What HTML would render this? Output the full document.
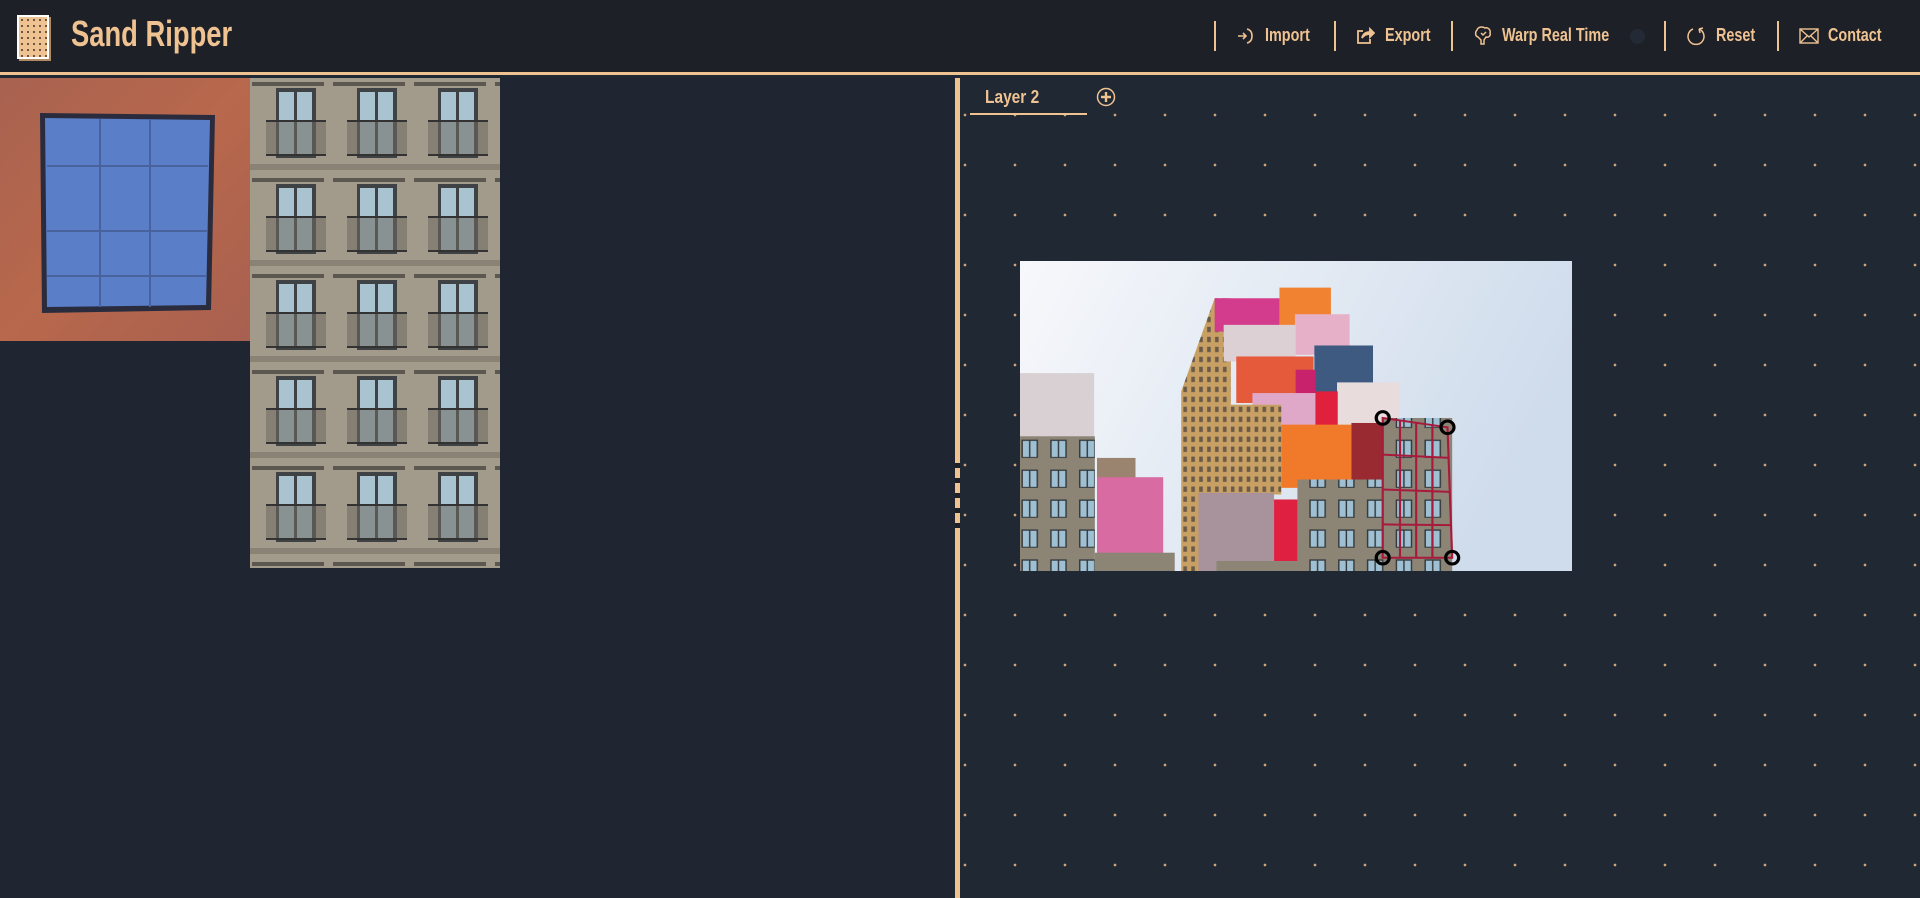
<!DOCTYPE html>
<html><head><meta charset="utf-8">
<style>
*{margin:0;padding:0;box-sizing:border-box}
body{width:1920px;height:898px;overflow:hidden;background:#202833;font-family:"Liberation Sans",sans-serif;position:relative}
.hdr{position:absolute;left:0;top:0;width:1920px;height:75px;background:#1d2027;border-bottom:3px solid #efc292}
.title{position:absolute;left:71px;top:13px;font-size:36px;font-weight:bold;color:#efc292;transform:scaleX(0.76);transform-origin:left;white-space:nowrap}
.logo{position:absolute;left:17px;top:15px;width:32px;height:44px;background:#efc292;border:2px solid #fff;box-shadow:2px 2px 0 #b08a60;
background-image:radial-gradient(circle,#5a4030 0.8px,transparent 1.2px);background-size:6px 6px}
.sep{position:absolute;top:21px;width:2px;height:30px;background:#efc292}
.t{position:absolute;top:24px;line-height:22px;color:#efc292;font-weight:bold;font-size:18px;transform:scaleX(0.8);transform-origin:left;white-space:nowrap}
.ic{position:absolute}
.left{position:absolute;left:0;top:78px;width:955px;height:820px;background:#1f2631}
.div{position:absolute;left:955px;top:78px;width:5px;height:820px;background:#efc292}
.gap{position:absolute;left:955px;width:5px;height:5px;background:#1d2027}
.right{position:absolute;left:960px;top:78px;width:960px;height:820px;background-color:#202833;
background-image:radial-gradient(circle at 5px 37px,#cfa57c 1.1px,transparent 1.6px);background-size:50px 50px}
</style></head><body>
<div class="hdr">
 <div class="logo"></div>
 <div class="title">Sand Ripper</div>
  <div class="sep" style="left:1214px"></div>
  <svg class="ic" style="left:1236px;top:27px" width="18" height="18" viewBox="0 0 18 18" fill="none" stroke="#efc292" stroke-width="1.6"><path d="M2 9h8M7 6l3 3-3 3M11 2c4 1 5 4 5 7s-1 6-5 7"/></svg>
  <div class="t" style="left:1265px">Import</div>
  <div class="sep" style="left:1334px"></div>
  <svg class="ic" style="left:1355px;top:26px" width="20" height="20" viewBox="0 0 20 20" fill="none" stroke="#efc292" stroke-width="1.8"><path d="M8 5H3v12h12v-4"/><path d="M7 12c1-4 4-6 8-6V3l4 4-4 4V8c-3 0-6 1-8 4z" fill="#efc292"/></svg>
  <div class="t" style="left:1385px">Export</div>
  <div class="sep" style="left:1451px"></div>
  <svg class="ic" style="left:1473px;top:25px" width="20" height="22" viewBox="0 0 20 22" fill="none" stroke="#efc292" stroke-width="1.5"><path d="M4 5c1-3 5-4 8-2 3-1 6 2 5 5 1 2-1 5-4 4l-2 3v4H8v-4L5 12C2 11 2 7 4 5z"/><path d="M8 8l2 2 3-3"/></svg>
  <div class="t" style="left:1502px">Warp Real Time</div>
  <span style="position:absolute;left:1630px;top:29px;width:15px;height:15px;border-radius:50%;background:#232a35"></span>
  <div class="sep" style="left:1664px"></div>
  <svg class="ic" style="left:1686px;top:26px" width="20" height="20" viewBox="0 0 20 20" fill="none" stroke="#efc292" stroke-width="1.5"><path d="M13 3a8 8 0 1 1-6 0"/><path d="M13 3l1 4M13 3l4-1"/></svg>
  <div class="t" style="left:1716px">Reset</div>
  <div class="sep" style="left:1777px"></div>
  <svg class="ic" style="left:1799px;top:28px" width="20" height="16" viewBox="0 0 20 16" fill="none" stroke="#efc292" stroke-width="1.4"><rect x="1" y="1" width="18" height="14"/><path d="M1 1l9 8 9-8M1 15l7-7M19 15l-7-7"/></svg>
  <div class="t" style="left:1828px">Contact</div>
</div>

<div class="left">
 <svg style="position:absolute;left:0;top:0" width="500" height="490" viewBox="0 77 500 490">
  <defs>
   <linearGradient id="br" x1="0" y1="0" x2="1" y2="1"><stop offset="0" stop-color="#a86250"/><stop offset="0.5" stop-color="#b8684c"/><stop offset="1" stop-color="#a86050"/></linearGradient>
   <pattern id="bw" x="250" y="77" width="81" height="96" patternUnits="userSpaceOnUse">
    <rect width="81" height="96" fill="#a29a8b"/>
    <rect x="0" y="86" width="81" height="6" fill="#8a8274"/>
    <rect x="2" y="4" width="72" height="4" fill="#5c5850"/>
    <rect x="26" y="10" width="40" height="70" fill="#3e4244"/>
    <rect x="29" y="14" width="15" height="63" fill="#a9c4d0"/>
    <rect x="47" y="14" width="15" height="63" fill="#a9c4d0"/>
    <rect x="16" y="42" width="60" height="36" fill="#6e6a60" opacity="0.55"/>
    <rect x="16" y="42" width="60" height="2" fill="#333"/>
    <rect x="16" y="76" width="60" height="2" fill="#333"/>
   </pattern>
  </defs>
  <rect x="0" y="77" width="250" height="263" fill="url(#br)"/>
  <polygon points="40,112 215,114 211,309 42,312" fill="#2a2c3e"/>
  <polygon points="45,117 210,119 206,304 47,306" fill="#5a7ec8"/>
  <path d="M100 118v188M150 118v188M47 165h161M47 230h160M47 275h160" stroke="#48629e" stroke-width="2"/>
  <rect x="250" y="77" width="250" height="490" fill="url(#bw)"/>
 </svg>
</div>

<div class="div"></div>
<div class="gap" style="top:463px"></div>
<div class="gap" style="top:478px"></div>
<div class="gap" style="top:493px"></div>
<div class="gap" style="top:508px"></div>
<div class="gap" style="top:523px"></div>

<div class="right">
 <div style="position:absolute;left:25px;top:9px;color:#efc292;font-weight:bold;font-size:18px;transform:scaleX(0.86);transform-origin:left;white-space:nowrap">Layer 2</div>
 <div style="position:absolute;left:10px;top:35px;width:117px;height:2px;background:#efc292"></div>
 <svg style="position:absolute;left:136px;top:9px" width="20" height="20" viewBox="0 0 20 20" fill="none" stroke="#efc292" stroke-width="1.5"><circle cx="10" cy="10" r="8.5"/><path d="M10 5v10M5 10h10" stroke-width="2.4"/></svg>

 <svg style="position:absolute;left:60px;top:183px" width="552" height="310" viewBox="14 18 1534 932" preserveAspectRatio="none">
  <defs>
   <linearGradient id="sky" x1="0" y1="0" x2="1" y2="0.3"><stop offset="0" stop-color="#f7f8fb"/><stop offset="1" stop-color="#cfdcec"/></linearGradient>
   <pattern id="gw" width="80" height="90" patternUnits="userSpaceOnUse">
    <rect width="80" height="90" fill="#8c8576"/>
    <rect x="18" y="15" width="46" height="55" fill="#33393c"/>
    <rect x="22" y="19" width="17" height="48" fill="#9fc0d2"/>
    <rect x="43" y="19" width="17" height="48" fill="#9fc0d2"/>
   </pattern>
   <pattern id="gd" width="22" height="30" patternUnits="userSpaceOnUse">
    <rect width="22" height="30" fill="#c9a064"/>
    <rect x="6" y="6" width="10" height="16" fill="#6a5a48"/>
   </pattern>
  </defs>
  <rect x="14" y="18" width="1534" height="932" fill="url(#sky)"/>
  <rect x="14" y="355" width="206" height="225" fill="#d9d0d3"/>
  <rect x="14" y="545" width="208" height="405" fill="url(#gw)"/>
  <rect x="228" y="610" width="107" height="60" fill="#9a8470"/>
  <rect x="228" y="668" width="184" height="232" fill="#d86ca2"/>
  <rect x="222" y="895" width="222" height="55" fill="#8c8576"/>
  <polygon points="462,410 555,130 600,130 600,950 462,950" fill="url(#gd)"/>
  <rect x="555" y="130" width="180" height="100" fill="#d33c8c"/>
  <rect x="735" y="98" width="143" height="147" fill="#f08232"/>
  <rect x="778" y="178" width="152" height="122" fill="#e6b0c8"/>
  <rect x="580" y="210" width="200" height="110" fill="#dcd0d4"/>
  <rect x="615" y="305" width="215" height="140" fill="#e65a3c"/>
  <rect x="832" y="272" width="163" height="148" fill="#3e5a80"/>
  <rect x="780" y="345" width="55" height="100" fill="#c8226c"/>
  <rect x="660" y="415" width="180" height="125" fill="#e0a8c8"/>
  <rect x="895" y="383" width="175" height="157" fill="#e8dcdc"/>
  <rect x="835" y="410" width="62" height="135" fill="#e0203c"/>
  <rect x="600" y="450" width="140" height="270" fill="url(#gd)"/>
  <rect x="740" y="510" width="195" height="190" fill="#f07a2a"/>
  <rect x="935" y="505" width="85" height="195" fill="#9a2a32"/>
  <rect x="510" y="715" width="210" height="235" fill="#a8929c"/>
  <rect x="720" y="735" width="65" height="185" fill="#e02040"/>
  <rect x="785" y="675" width="235" height="275" fill="url(#gw)"/>
  <rect x="1020" y="490" width="195" height="460" fill="url(#gw)"/>
  <rect x="560" y="920" width="230" height="30" fill="#8c8576"/>
  <g stroke="#a81a3c" stroke-width="6" fill="none">
   <polygon points="1022,490 1202,518 1215,910 1022,910"/>
   <path d="M1022,600 L1207,610 M1022,705 L1210,712 M1022,810 L1213,812 M1070,497 V910 M1115,504 V910 M1160,510 V910"/>
  </g>
  <g stroke="#000" stroke-width="9" fill="none">
   <ellipse cx="1022" cy="490" rx="18" ry="19"/>
   <ellipse cx="1202" cy="518" rx="18" ry="19"/>
   <ellipse cx="1022" cy="910" rx="18" ry="19"/>
   <ellipse cx="1215" cy="910" rx="18" ry="19"/>
  </g>
 </svg>
</div>
</body></html>
